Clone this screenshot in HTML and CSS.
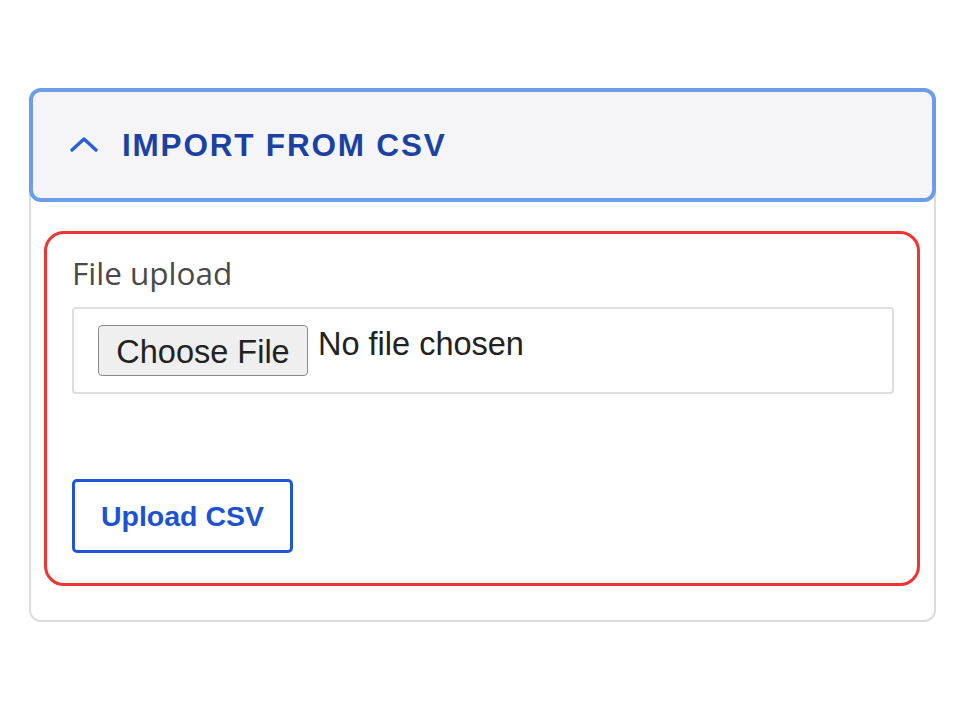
FILE: index.html
```html
<!DOCTYPE html>
<html lang="en">
<head>
<meta charset="utf-8">
<title>Import from CSV</title>
<link rel="stylesheet" href="styles.css">
</head>
<body>
<div class="card">
  <div class="header">
    <svg class="chev" width="28" height="16" viewBox="0 0 28 16" aria-hidden="true">
      <polyline points="2,14 14,3 26,14" fill="none" stroke="#2b5fd4" stroke-width="3.4" stroke-linecap="round" stroke-linejoin="round"/>
    </svg>
    <span class="title">IMPORT FROM CSV</span>
  </div>
  <div class="panel">
    <div class="label">File upload</div>
    <div class="filebox">
      <span class="choose">Choose File</span>
      <span class="nofile">No file chosen</span>
    </div>
    <button class="upload">Upload CSV</button>
  </div>
</div>
</body>
</html>
```
FILE: styles.css
```css
html, body {
  margin: 0;
  padding: 0;
  background: #ffffff;
}
body {
  font-family: "Liberation Sans", Arial, sans-serif;
}
.card {
  box-sizing: border-box;
  margin: 88px 0 0 29px;
  width: 907px;
  height: 534px;
  border: 2px solid #dcdcdc;
  border-top: none;
  border-radius: 12px;
  background: #fff;
}
.header {
  box-sizing: border-box;
  margin: 0 -2px;
  height: 114px;
  border: 4px solid #6b9de9;
  border-radius: 12px;
  background: #f5f5f7;
  display: flex;
  align-items: center;
  padding-left: 37px;
  gap: 24px;
}
.chev {
  display: block;
  margin-top: -2px;
}
.title {
  font-weight: bold;
  font-size: 31.5px;
  letter-spacing: 1.8px;
  color: #1b41a3;
  line-height: 1;
  margin-top: 1px;
}
.panel {
  box-sizing: border-box;
  margin: 29px 14px 0 13px;
  height: 355px;
  border: 3.5px solid #f03333;
  border-radius: 20px;
  padding: 20px 23px 0 25px;
}
.label {
  font-family: "Open Sans", "Liberation Sans", sans-serif;
  font-size: 31.5px;
  line-height: 38px;
  color: #4a4a4a;
}
.filebox {
  box-sizing: border-box;
  margin-top: 15px;
  height: 87px;
  border: 2px solid #dedede;
  border-radius: 4px;
  display: flex;
  align-items: center;
  padding-left: 24px;
  gap: 10px;
}
.choose {
  box-sizing: border-box;
  height: 51px;
  width: 210px;
  display: flex;
  align-items: center;
  justify-content: center;
  font-size: 32.5px;
  color: #222;
  background: #efefef;
  border: 1.5px solid #8a8a8a;
  border-radius: 4px;
  padding-top: 3px;
}
.nofile {
  font-size: 32.5px;
  color: #222;
  margin-top: -12px;
}
.upload {
  display: block;
  box-sizing: border-box;
  margin-top: 85px;
  width: 221px;
  height: 74px;
  border: 3px solid #1f55d6;
  border-radius: 5px;
  background: #fff;
  font-family: "Liberation Sans", Arial, sans-serif;
  font-weight: bold;
  font-size: 28.5px;
  color: #1d52d4;
  padding: 0;
}
```
